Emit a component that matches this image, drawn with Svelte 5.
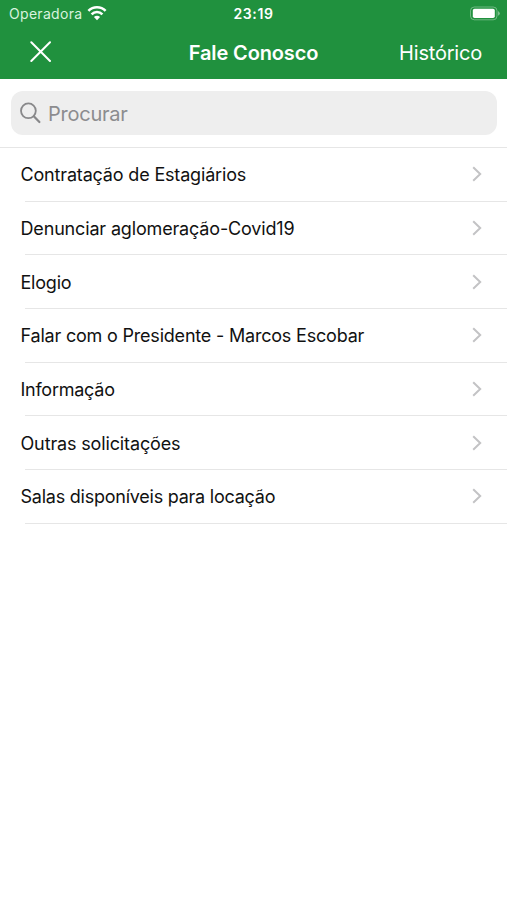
<script>
  const topics = [
    { label: 'Contratação de Estagiários', spacing: -0.17 },
    { label: 'Denunciar aglomeração-Covid19', spacing: -0.16 },
    { label: 'Elogio', spacing: -0.22 },
    { label: 'Falar com o Presidente - Marcos Escobar', spacing: -0.2 },
    { label: 'Informação', spacing: -0.25 },
    { label: 'Outras solicitações', spacing: -0.14 },
    { label: 'Salas disponíveis para locação', spacing: -0.24 }
  ];
</script>

<main>
  <header>
    <div class="status">
      <div class="carrier">
        <span>Operadora</span>
        <svg width="20" height="16" viewBox="0 0 20 16" fill="none" stroke="#fff" stroke-width="2.6">
          <path d="M1.4 5.9a12 12 0 0 1 17.2 0" />
          <path d="M4.6 9.3a7.6 7.6 0 0 1 10.8 0" />
          <path d="M10 15.2 6.9 12q3.1-2.4 6.2 0z" fill="#fff" stroke="none" />
        </svg>
      </div>
      <time>23:19</time>
      <div class="battery">
        <svg width="32" height="16" viewBox="0 0 32 16">
          <rect x="1.5" y="1" width="26.5" height="12.8" rx="3.8" fill="none" stroke="#fff" stroke-opacity=".35" />
          <rect x="3.8" y="2.8" width="22" height="9.2" rx="1.8" fill="#fff" />
          <path d="M29.2 5q3 2.4 0 4.8z" fill="#fff" fill-opacity=".5" />
        </svg>
      </div>
    </div>
    <nav>
      <button class="close" aria-label="Fechar">
        <svg width="22" height="22" viewBox="0 0 22 22" fill="none" stroke="#fff" stroke-width="2" stroke-linecap="round">
          <path d="M1.3 1.3 20 20M20 1.3 1.3 20" />
        </svg>
      </button>
      <h1>Fale Conosco</h1>
      <button class="history">Histórico</button>
    </nav>
  </header>

  <div class="search-area">
    <div class="search">
      <svg width="22" height="22" viewBox="0 0 22 22" fill="none" stroke="#88888a" stroke-width="1.8" stroke-linecap="round">
        <circle cx="8.4" cy="8.8" r="7.4" />
        <path d="m13.8 14.2 5.6 5.8" stroke-width="2.2" />
      </svg>
      <span>Procurar</span>
    </div>
  </div>

  <ul>
    {#each topics as topic}
      <li>
        <span style="letter-spacing: {topic.spacing}px">{topic.label}</span>
        <svg width="10" height="16" viewBox="0 0 10 16" fill="none" stroke="#c3c3c5" stroke-width="2">
          <path d="m1.2 1.3 7 6.7-7 6.7" />
        </svg>
      </li>
    {/each}
  </ul>
</main>

<style>
  :global(body) { margin: 0; background: #fff; }
  main {
    height: 900px;
    overflow: hidden;
    background: #fff;
    color: #111;
    font-family: Inter, "Liberation Sans", sans-serif;
  }
  header { height: 79px; background: #20913e; color: #fff; }
  .status {
    display: grid;
    grid-template-columns: 1fr auto 1fr;
    align-items: center;
    height: 27px;
    font-size: 14px;
  }
  .carrier { display: flex; align-items: center; gap: 5px; padding-left: 9px; color: #d8f3df; letter-spacing: 0.3px; }
  .carrier svg { display: block; margin-bottom: 1px; }
  time { font-weight: 600; font-size: 14px; letter-spacing: 0.6px; }
  .battery { display: flex; justify-content: flex-end; padding-right: 6px; }
  nav {
    display: grid;
    grid-template-columns: 1fr auto 1fr;
    align-items: center;
    height: 51px;
  }
  button { border: 0; padding: 0; background: none; color: inherit; font: inherit; }
  .close { display: flex; justify-self: start; margin: 0 0 1px 30px; }
  h1 { margin: 0; font-size: 20px; line-height: 24px; font-weight: 600; letter-spacing: -0.13px; }
  .history { justify-self: end; margin-right: 25px; font-size: 20px; line-height: 24px; letter-spacing: -0.2px; }
  .search-area {
    box-sizing: border-box;
    height: 69px;
    padding: 12px 10px 0 11px;
    border-bottom: 1px solid #e6e6e6;
  }
  .search {
    display: flex;
    align-items: center;
    gap: 6px;
    box-sizing: border-box;
    height: 44px;
    padding-left: 9px;
    border-radius: 12px;
    background: #eee;
    color: #8c8c8f;
    font-size: 20px;
    letter-spacing: -0.25px;
  }
  .search span { padding-top: 2px; }
  ul { margin: 0; padding: 0; list-style: none; }
  li {
    display: flex;
    align-items: center;
    justify-content: space-between;
    box-sizing: border-box;
    height: 53.7px;
    padding: 0 25px 0 20.5px;
    font-size: 18px;
    line-height: 22px;
    white-space: nowrap;
    background: linear-gradient(#e6e6e6, #e6e6e6) 25px 100% / 100% 1px no-repeat;
  }
  li span { padding-top: 1px; }
  li svg { margin-bottom: 1px; }
</style>
